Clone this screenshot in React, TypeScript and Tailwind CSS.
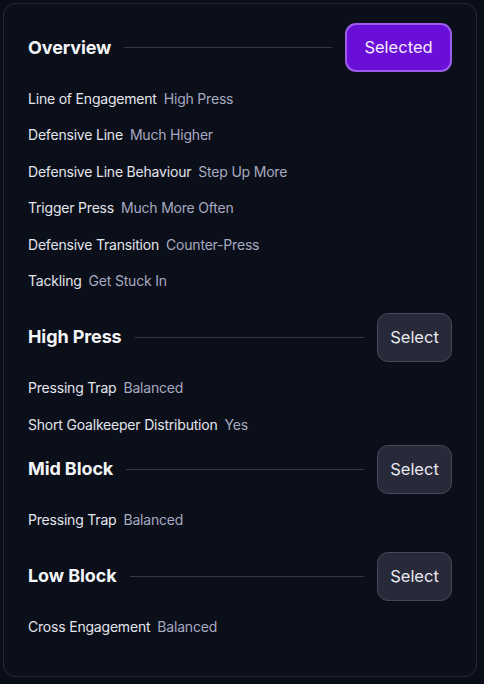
import React from 'react';

type Row = { label: string; value: string };

type Section = {
  title: string;
  selected?: boolean;
  rows: Row[];
  gapTop: string;
};

const sections: Section[] = [
  {
    title: 'Overview',
    selected: true,
    gapTop: 'mt-0',
    rows: [
      { label: 'Line of Engagement', value: 'High Press' },
      { label: 'Defensive Line', value: 'Much Higher' },
      { label: 'Defensive Line Behaviour', value: 'Step Up More' },
      { label: 'Trigger Press', value: 'Much More Often' },
      { label: 'Defensive Transition', value: 'Counter-Press' },
      { label: 'Tackling', value: 'Get Stuck In' },
    ],
  },
  {
    title: 'High Press',
    gapTop: 'mt-[22px]',
    rows: [
      { label: 'Pressing Trap', value: 'Balanced' },
      { label: 'Short Goalkeeper Distribution', value: 'Yes' },
    ],
  },
  {
    title: 'Mid Block',
    gapTop: 'mt-[10px]',
    rows: [{ label: 'Pressing Trap', value: 'Balanced' }],
  },
  {
    title: 'Low Block',
    gapTop: 'mt-[22px]',
    rows: [{ label: 'Cross Engagement', value: 'Balanced' }],
  },
];

const SectionHeader: React.FC<{ title: string; selected?: boolean }> = ({ title, selected }) => (
  <div className="flex items-center">
    <h2 className="text-[18px] font-bold text-[#f4f5f8] leading-none tracking-[-0.1px]">{title}</h2>
    <div className="flex-1 h-px bg-[#323846] mx-[13px]" />
    {selected ? (
      <button className="h-[49px] w-[107px] rounded-[11px] border-2 border-[#9d5cec] bg-[#6a0fd7] text-[16.5px] text-[#f3ecff]">
        Selected
      </button>
    ) : (
      <button className="h-[49px] w-[75px] rounded-[11px] border-[1.5px] border-[#454858] bg-[#282a3a] text-[16.5px] text-[#e8e9ef]">
        Select
      </button>
    )}
  </div>
);

export default function App() {
  return (
    <div className="min-h-[684px] w-[484px] bg-[#0a0e19] pt-[3px] pl-[3px] font-['Inter',sans-serif]">
      <div className="w-[474px] h-[674px] rounded-[12px] border border-[#222836] bg-[#0b0f1a] px-[24px] pt-[19px]">
        {sections.map((s) => (
          <section key={s.title} className={s.gapTop}>
            <SectionHeader title={s.title} selected={s.selected} />
            <div className="mt-[16px] flex flex-col gap-[16.6px]">
              {s.rows.map((r, i) => (
                <div key={i} className="flex h-[20px] items-center gap-[7px] text-[14px] tracking-[-0.2px]">
                  <span className="text-[#e3e5ec]">{r.label}</span>
                  <span className="text-[#a6a9c0]">{r.value}</span>
                </div>
              ))}
            </div>
          </section>
        ))}
      </div>
    </div>
  );
}
